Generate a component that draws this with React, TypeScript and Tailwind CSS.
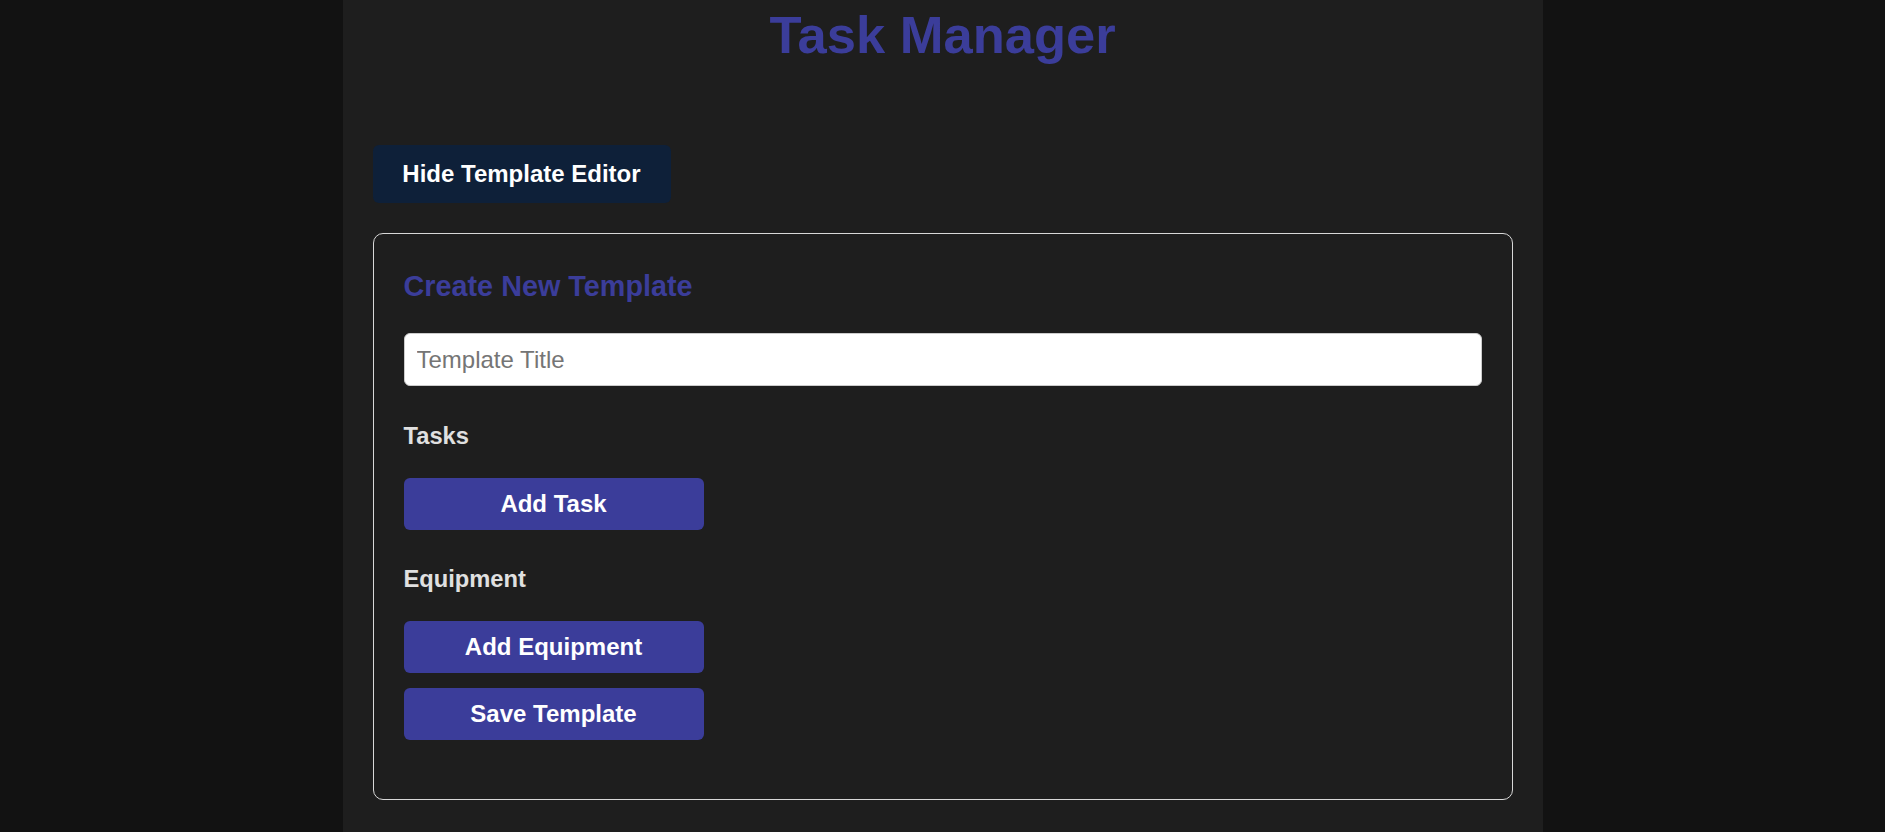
import React from "react";

export default function App() {
  return (
    <div className="min-h-[832px] w-full bg-[#121212] font-['Liberation_Sans',Arial,sans-serif]">
      <div className="mx-auto w-[1200px] min-h-[832px] bg-[#1e1e1e] px-[30px]">
        <h1 className="pt-[5px] text-center text-[52.5px] font-bold leading-[60px] text-[#3b3d9a]">
          Task Manager
        </h1>
        <div className="mt-[80px]">
          <button className="h-[58px] w-[298px] rounded-[6px] bg-[#0e2039] text-[24px] font-bold text-white">
            Hide Template Editor
          </button>
        </div>
        <div className="mt-[30px] rounded-[10px] border border-[#d8d8d8] px-[30px] pt-[30px] pb-[59px]">
          <h2 className="mt-[6px] text-[28.8px] font-bold leading-[33px] text-[#3b3d9a]">
            Create New Template
          </h2>
          <input
            type="text"
            placeholder="Template Title"
            className="mt-[30px] block h-[53px] w-full rounded-[6px] border border-[#cccccc] bg-white px-[12px] text-[24px] text-black placeholder:text-[#757575] outline-none"
          />
          <h3 className="mt-[37px] text-[23.7px] font-bold leading-[26px] text-[#e0e0e0]">Tasks</h3>
          <button className="mt-[29px] block h-[52px] w-[300px] rounded-[6px] bg-[#3b3d9a] text-[24px] font-bold text-white">
            Add Task
          </button>
          <h3 className="mt-[36px] text-[23.7px] font-bold leading-[26px] text-[#e0e0e0]">Equipment</h3>
          <button className="mt-[29px] block h-[52px] w-[300px] rounded-[6px] bg-[#3b3d9a] text-[24px] font-bold text-white">
            Add Equipment
          </button>
          <button className="mt-[15px] block h-[52px] w-[300px] rounded-[6px] bg-[#3b3d9a] text-[24px] font-bold text-white">
            Save Template
          </button>
        </div>
      </div>
    </div>
  );
}
